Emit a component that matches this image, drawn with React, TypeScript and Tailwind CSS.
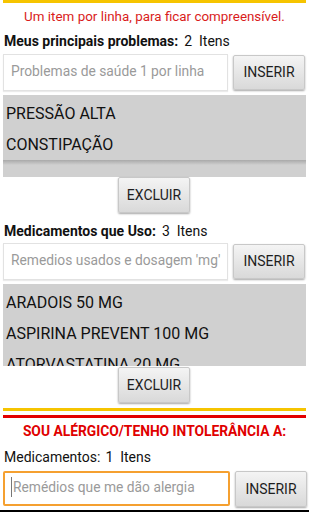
import React from "react";

function Btn({ label, className = "" }: { label: string; className?: string }) {
  return (
    <div
      className={`flex items-center justify-center rounded-[2px] border border-[#c8c8c8] bg-gradient-to-b from-[#f4f4f4] to-[#d9d9d9] shadow-[0_1px_2px_rgba(0,0,0,0.35)] text-[14px] text-[#1e1e1e] ${className}`}
    >
      {label}
    </div>
  );
}

function InputRow({
  placeholder,
  focused = false,
  top,
}: {
  placeholder: string;
  focused?: boolean;
  top: string;
}) {
  return (
    <div className={`flex items-start ${top}`}>
      {focused ? (
        <div className="ml-[3px] w-[227px] h-[35px] border-2 border-[#f5a030] rounded-[2px] bg-white flex items-center pl-[6px] pb-[3px] text-[13.8px] text-[#9a9a9a]">
          <span className="w-[1px] h-[20px] bg-[#777] mr-[1px]" />
          {placeholder}
        </div>
      ) : (
        <div className="ml-[3px] w-[225px] h-[37px] border border-[#e2e2e2] bg-white shadow-[0_1px_1px_rgba(0,0,0,0.08)] flex items-center pl-[7px] pb-[3px] text-[13.8px] text-[#9a9a9a] whitespace-nowrap overflow-hidden">
          {placeholder}
        </div>
      )}
      <Btn label="INSERIR" className={`ml-[5px] w-[72px] ${focused ? "h-[36px]" : "h-[35px] mt-[1px]"}`} />
    </div>
  );
}

function Item({ text }: { text: string }) {
  return (
    <div className="h-[31px] flex items-center pl-[3px] text-[16px] text-[#111] whitespace-nowrap">{text}</div>
  );
}

export default function App() {
  return (
    <div className="w-[309px] h-[512px] overflow-hidden bg-white relative font-['Roboto',sans-serif] flex flex-col">
      <div className="mx-[3px] h-[3px] bg-[#f6c400]" />
      <div className="h-[29px] flex items-center justify-center text-[13.4px] text-[#d91c1c]">
        Um item por linha, para ficar compreensível.
      </div>
      <div className="h-[18px] flex items-center pl-[4px] text-[14px] text-[#111]">
        <span className="font-bold">Meus principais problemas:</span>
        <span className="ml-[6px]">2&nbsp; Itens</span>
      </div>
      <InputRow placeholder="Problemas de saúde 1 por linha" top="mt-[4px]" />
      <div className="mx-[3px] mt-[4px] h-[82px] bg-[#d0d0d0] flex flex-col">
        <div className="pt-[3px]">
          <Item text="PRESSÃO ALTA" />
          <Item text="CONSTIPAÇÃO" />
        </div>
        <div className="h-[5px] bg-gradient-to-b from-[#a9a9a9] to-[#d0d0d0]" />
      </div>
      <div className="flex justify-center">
        <Btn label="EXCLUIR" className="w-[72px] h-[36px] -ml-[1px]" />
      </div>
      <div className="h-[30px] pt-[7px] flex items-center pl-[4px] text-[14px] text-[#111]">
        <span className="font-bold">Medicamentos que Uso:</span>
        <span className="ml-[6px]">3&nbsp; Itens</span>
      </div>
      <InputRow placeholder="Remedios usados e dosagem 'mg'" top="" />
      <div className="mx-[3px] mt-[4px] h-[82px] bg-[#d0d0d0] overflow-hidden">
        <div className="pt-[3px]">
          <Item text="ARADOIS 50 MG" />
          <Item text="ASPIRINA PREVENT 100 MG" />
          <Item text="ATORVASTATINA 20 MG" />
        </div>
      </div>
      <div className="flex justify-center">
        <Btn label="EXCLUIR" className="w-[72px] h-[36px] -ml-[1px] mt-[1px]" />
      </div>
      <div className="mx-[3px] mt-[5px] h-[3px] bg-[#f6c400]" />
      <div className="mx-[3px] mt-[4px] h-[3px] bg-[#e30000]" />
      <div className="h-[26px] flex items-center justify-center text-[13.8px] font-bold text-[#e00000]">
        SOU ALÉRGICO/TENHO INTOLERÂNCIA A:
      </div>
      <div className="h-[27px] flex items-center pl-[4px] text-[14px] text-[#111]">
        Medicamentos:<span className="ml-[5px]">1&nbsp; Itens</span>
      </div>
      <InputRow placeholder="Remédios que me dão alergia" focused top="" />
      <div className="absolute left-0 bottom-0 w-full h-[2px] bg-black" />
    </div>
  );
}
